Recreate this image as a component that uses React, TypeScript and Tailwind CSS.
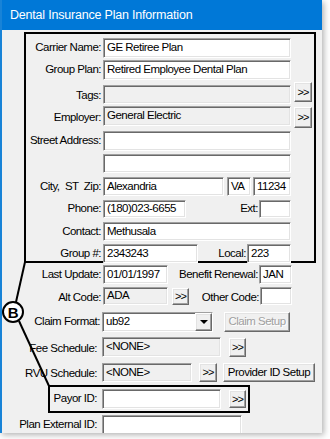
import React from 'react'

const sunk =
  'border border-t-[#a0a0a0] border-l-[#a0a0a0] border-r-white border-b-white shadow-[inset_1px_1px_0_#696969,inset_-1px_-1px_0_#e3e3e3]'
const raised =
  'bg-[#f0f0f0] border border-t-white border-l-white border-r-[#696969] border-b-[#696969] shadow-[inset_-1px_-1px_0_#a0a0a0,inset_1px_1px_0_#e3e3e3]'

function Field({ value, disabled, className = '' }: { value?: string; disabled?: boolean; className?: string }) {
  return (
    <div className={`${sunk} ${disabled ? 'bg-[#f0f0f0]' : 'bg-white'} flex items-center pl-[3px] shrink-0 whitespace-nowrap overflow-hidden ${className}`}>
      {value}
    </div>
  )
}

function More({ className = '' }: { className?: string }) {
  return (
    <div className={`${raised} flex items-center justify-center text-[11px] tracking-[-1px] shrink-0 ${className}`}>
      &gt;&gt;
    </div>
  )
}

// ── Main Component ────────────────────────────────────────────────────────────

export default function App() {
  return (
    <div className="relative w-[330px] h-[439px] bg-white overflow-hidden whitespace-nowrap font-['Liberation_Sans',Arial,sans-serif] text-[11.5px] tracking-[-0.5px] text-black">
      <div className="w-[322px] h-[433px] bg-[#f0f0f0] border-l-2 border-[#1883d7] shadow-[2px_2px_6px_rgba(0,0,0,0.3)] overflow-hidden">
        <div className="h-[30px] -ml-[2px] bg-[#0078d7] text-white flex items-center pl-[10px] text-[12.5px] tracking-[-0.2px]">
          Dental Insurance Plan Information
        </div>

        {/* annotated block A */}
        <div className="ml-[22px] mt-[2px] w-[292px] h-[231px] border-2 border-black pt-[4px]">
          <div className="flex items-center h-[20px]">
            <span className="w-[75px] text-right mr-[2px]">Carrier Name:</span>
            <Field value="GE Retiree Plan" className="w-[188px] h-[20px]" />
          </div>
          <div className="flex items-center h-[20px] mt-[2px]">
            <span className="w-[75px] text-right mr-[2px]">Group Plan:</span>
            <Field value="Retired Employee Dental Plan" className="w-[188px] h-[20px]" />
          </div>
          <div className="flex h-[22px] mt-[2px]">
            <span className="w-[75px] text-right mr-[2px] mt-[5px]">Tags:</span>
            <Field disabled className="w-[188px] h-[19px] mt-[3px]" />
            <More className="w-[18px] h-[20px] ml-[3px]" />
          </div>
          <div className="flex h-[24px]">
            <span className="w-[75px] text-right mr-[2px] mt-[5px]">Employer:</span>
            <Field disabled value="General Electric" className="w-[188px] h-[20px] mt-[2px]" />
            <More className="w-[18px] h-[21px] ml-[3px] mt-[3px]" />
          </div>
          <div className="flex h-[20px] mt-[3px]">
            <span className="w-[75px] text-right mr-[2px] mt-[1px]">Street Address:</span>
            <Field className="w-[188px] h-[20px]" />
          </div>
          <div className="flex h-[19px] mt-[3px] pl-[77px]">
            <Field className="w-[188px] h-[19px]" />
          </div>
          <div className="flex items-center h-[19px] mt-[4px]">
            <span className="w-[75px] text-right mr-[2px] whitespace-pre">City,  ST  Zip:</span>
            <Field value="Alexandria" className="w-[121px] h-[19px]" />
            <Field value="VA" className="w-[24px] h-[19px] ml-[3px]" />
            <Field value="11234" className="w-[38px] h-[19px] ml-[2px]" />
          </div>
          <div className="flex items-center h-[18px] mt-[4px]">
            <span className="w-[75px] text-right mr-[2px]">Phone:</span>
            <Field value="(180)023-6655" className="w-[83px] h-[18px]" />
            <span className="flex-1 text-right mr-[1px]">Ext:</span>
            <Field className="w-[32px] h-[18px] mr-[23px]" />
          </div>
          <div className="flex items-center h-[19px] mt-[4px]">
            <span className="w-[75px] text-right mr-[2px]">Contact:</span>
            <Field value="Methusala" className="w-[188px] h-[19px]" />
          </div>
          <div className="flex items-center h-[19px] mt-[3px]">
            <span className="w-[75px] text-right mr-[2px]">Group #:</span>
            <Field value="2343243" className="w-[95px] h-[19px]" />
            <span className="flex-1 text-right mr-[1px]">Local:</span>
            <Field value="223" className="w-[44px] h-[19px] mr-[23px]" />
          </div>
        </div>

        <div className="flex items-center h-[19px] mt-[2px] w-[290px]">
          <span className="w-[99px] text-right mr-[2px]">Last Update:</span>
          <Field value="01/01/1997" className="w-[65px] h-[19px]" />
          <span className="flex-1 text-right mr-[1px]">Benefit Renewal:</span>
          <Field value="JAN" className="w-[33px] h-[19px]" />
        </div>
        <div className="flex h-[18px] mt-[3px] w-[290px]">
          <span className="w-[99px] text-right mr-[2px] mt-[2px]">Alt Code:</span>
          <div className={`${sunk} bg-[#f0f0f0] w-[65px] h-[18px] pl-[3px] leading-[14px] shrink-0`}>ADA</div>
          <More className="w-[17px] h-[17px] ml-[4px] mt-[1px]" />
          <span className="flex-1 text-right mr-[1px] mt-[2px]">Other Code:</span>
          <Field className="w-[32px] h-[18px]" />
        </div>
        <div className="flex items-center h-[20px] mt-[7px]">
          <span className="w-[98px] text-right mr-[2px]">Claim Format:</span>
          <div className={`${sunk} bg-white w-[111px] h-[20px] flex items-center pl-[3px] shrink-0`}>
            <span className="flex-1">ub92</span>
            <div className={`${raised} w-[17px] h-[18px] flex items-center justify-center`}>
              <div className="w-0 h-0 border-l-[4px] border-r-[4px] border-t-[4px] border-l-transparent border-r-transparent border-t-black" />
            </div>
          </div>
          <div className={`${raised} w-[66px] h-[20px] ml-[11px] flex items-center justify-center text-[#a0a0a0] [text-shadow:1px_1px_0_#fff]`}>
            Claim Setup
          </div>
        </div>
        <div className="flex h-[20px] mt-[5px]">
          <span className="w-[95px] text-right mr-[5px] mt-[3px]">Fee Schedule:</span>
          <Field disabled value="<NONE>" className="w-[119px] h-[20px]" />
          <More className="w-[17px] h-[19px] ml-[8px] mt-[1px]" />
        </div>
        <div className="flex items-center h-[19px] mt-[6px]">
          <span className="w-[95px] text-right mr-[5px] mt-[2px]">RVU Schedule:</span>
          <Field disabled value="<NONE>" className="w-[90px] h-[19px]" />
          <More className="w-[18px] h-[19px] ml-[7px]" />
          <div className={`${raised} w-[92px] h-[19px] ml-[6px] flex items-center justify-center`}>Provider ID Setup</div>
        </div>

        {/* annotated block B */}
        <div className="ml-[46px] mt-[3px] w-[202px] h-[28px] border-2 border-black flex items-center">
          <span className="w-[47px] text-right mr-[5px]">Payor ID:</span>
          <Field className="w-[119px] h-[20px]" />
          <More className="w-[17px] h-[18px] ml-[8px]" />
        </div>
        <div className="flex items-center h-[20px] mt-[2px]">
          <span className="w-[95px] text-right mr-[5px]">Plan External ID:</span>
          <Field className="w-[140px] h-[20px]" />
        </div>
      </div>

      <svg className="absolute inset-0 pointer-events-none" width="330" height="439" viewBox="0 0 330 439">
        <line x1="25" y1="262" x2="16" y2="302" stroke="black" strokeWidth="2" />
        <line x1="19" y1="321" x2="49" y2="386" stroke="black" strokeWidth="2" />
        <circle cx="13" cy="312" r="10" fill="white" stroke="black" strokeWidth="2" />
        <text x="13" y="317.5" textAnchor="middle" fontSize="15" fontWeight="bold" fontFamily="Liberation Sans, Arial, sans-serif">
          B
        </text>
      </svg>
    </div>
  )
}
